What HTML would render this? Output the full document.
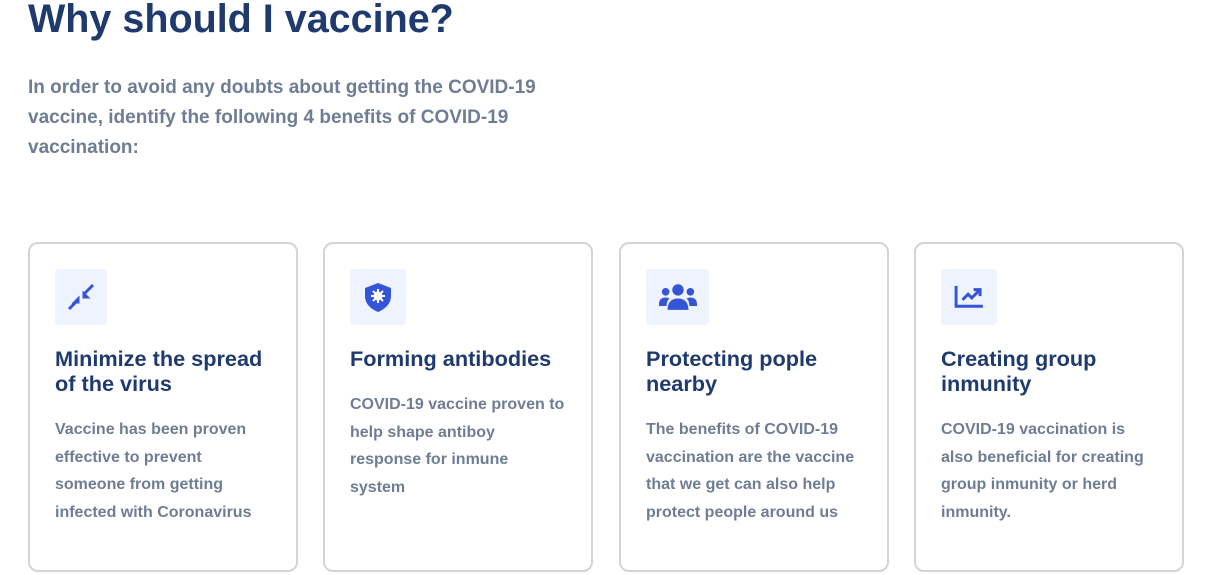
<!DOCTYPE html>
<html><head><meta charset="utf-8"><style>
*{margin:0;padding:0;box-sizing:border-box}
body{width:1216px;height:575px;overflow:hidden;background:#fff;font-family:"Liberation Sans",Arial,sans-serif;position:relative}
h1{position:absolute;left:28px;top:-6px;font-size:39.5px;font-weight:700;color:#1e3a6e;line-height:50px}
.intro{position:absolute;left:28px;top:73px;width:540px;font-size:19px;font-weight:700;color:#6f7d94;line-height:30px}
.card{position:absolute;top:242px;width:270px;height:330px;border:2px solid #d4d4d4;border-radius:10px}
.ic{position:absolute;left:25px;top:25px;height:56px;background:#eef3fe;border-radius:4px;display:flex;align-items:center;justify-content:center}
.t{position:absolute;left:25px;top:102px;width:230px;font-size:21.7px;font-weight:700;color:#1e3a6e;line-height:25px}
.d{position:absolute;left:25px;width:217px;font-size:16px;font-weight:700;color:#6f7d94;line-height:27.5px}
</style></head><body>
<h1>Why should I vaccine?</h1>
<div class="intro">In order to avoid any doubts about getting the COVID-19 vaccine, identify the following 4 benefits of COVID-19 vaccination:</div>

<div class="card" style="left:28px">
<div class="ic" style="width:52px"><svg width="28" height="28" viewBox="0 0 28 28" fill="none" stroke="#3355d6" stroke-width="3"><path d="M2 26l9-9"/><path d="M26 2l-9 9"/><path d="M12.5 12.5v8h-8z M15.5 7.5v8h8z" fill="#3355d6" stroke="none"/></svg></div>
<div class="t">Minimize the spread of the virus</div>
<div class="d" style="top:172px">Vaccine has been proven effective to prevent someone from getting infected with Coronavirus</div>
</div>

<div class="card" style="left:323px">
<div class="ic" style="width:56px"><svg width="30" height="32" viewBox="0 0 30 32"><path d="M15 2l13 5v8c0 8-6 13-13 16C8 28 2 23 2 15V7z" fill="#3355d6"/><g stroke="#fff" stroke-width="2"><circle cx="15" cy="15" r="3.5" fill="#fff"/><path d="M15 8v14M8 15h14M10 10l10 10M20 10l-10 10"/></g></svg></div>
<div class="t">Forming antibodies</div>
<div class="d" style="top:147px">COVID-19 vaccine proven to help shape antiboy response for inmune system</div>
</div>

<div class="card" style="left:619px">
<div class="ic" style="width:63px"><svg width="38" height="27" viewBox="0 0 40 28" fill="#3355d6"><circle cx="20" cy="6" r="6"/><circle cx="7" cy="8" r="4"/><circle cx="33" cy="8" r="4"/><path d="M9 27c0-8 4-12 11-12s11 4 11 12z"/><path d="M0 21c0-5 3-7 7-7 2 0 3 1 4 1-2 2-3 4-3 8H0z"/><path d="M40 21c0-5-3-7-7-7-2 0-3 1-4 1 2 2 3 4 3 8h8z"/></svg></div>
<div class="t">Protecting pople nearby</div>
<div class="d" style="top:172px">The benefits of COVID-19 vaccination are the vaccine that we get can also help protect people around us</div>
</div>

<div class="card" style="left:914px">
<div class="ic" style="width:56px"><svg width="30" height="24" viewBox="0 0 32 26" fill="none" stroke="#3355d6" stroke-width="3.2"><path d="M2 1v22h29"/><path d="M9 16l6-6 4 4 8-8"/><path d="M21 5h7v7"/></svg></div>
<div class="t">Creating group inmunity</div>
<div class="d" style="top:172px">COVID-19 vaccination is also beneficial for creating group inmunity or herd inmunity.</div>
</div>
</body></html>
